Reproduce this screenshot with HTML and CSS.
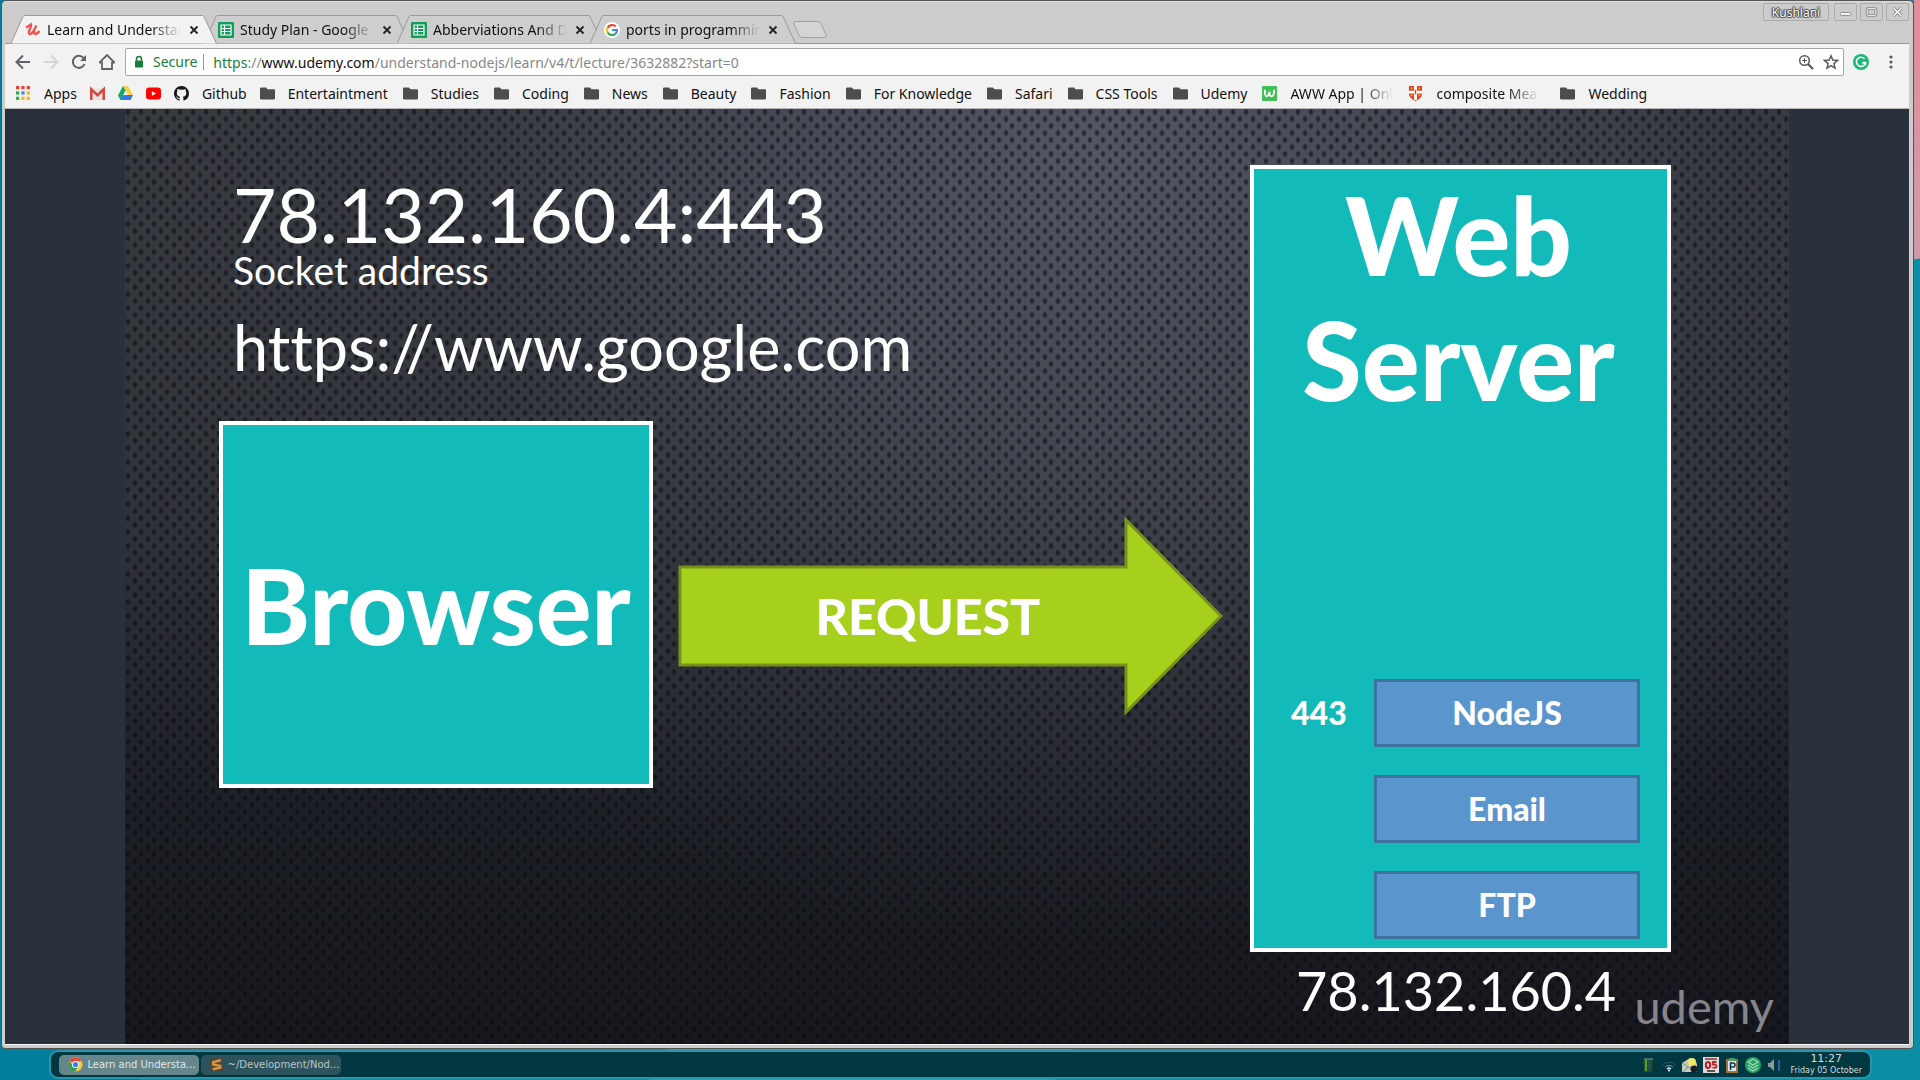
FILE: index.html
```html
<!DOCTYPE html>
<html lang="en">
<head>
<meta charset="utf-8">
<title>Learn and Understand NodeJS</title>
<link rel="stylesheet" href="styles.css">
</head>
<body>
<svg class="defs" width="0" height="0" aria-hidden="true">
  <symbol id="folder" viewBox="0 0 14 14"><path d="M1 1.500h4.500L7 3h6q1 0 1 1v7.500q0 1-1 1H1q-1 0-1-1v-9q0-1 1-1z" fill="#4d4d4d"/></symbol>
  <symbol id="sheet" viewBox="0 0 16 16"><rect width="16" height="16" rx="1" fill="#109d59"/><path d="M3 3h10v10H3zM3 6.500h10M3 9.500h10M6.500 3v10" fill="none" stroke="#fff" stroke-width="1.200"/></symbol>
  <symbol id="close" viewBox="0 0 10 10"><path d="M1.500 1.500l7 7m0-7l-7 7" stroke="#222" stroke-width="1.800" fill="none"/></symbol>
  <symbol id="tabshape" viewBox="0 0 206 29"><path d="M0 28.500L12 1.500Q12.500.500 14 .500H191Q192.500.500 193 1.500L205.500 28.500" stroke="#999"/></symbol>
</svg>
<div class="desktop">
<main class="window">
  <header class="titlebar">
    <nav class="tabs" aria-label="Tabs">
      <div class="tab active"><svg class="shape"><use href="#tabshape"/></svg>
        <svg class="fav" viewBox="0 0 16 16"><path d="M1 5.500Q4 4 6 2.500Q6.500 4 4.500 8Q3 12 5 12Q7.500 12 10 6L11.500 3.500M10 6Q8 12 10.500 12Q12.500 12 14.500 9" fill="none" stroke="#ec5252" stroke-width="2.300"/></svg>
        <a href="#">Learn and Understand</a><button aria-label="Close tab"><svg><use href="#close"/></svg></button></div>
      <div class="tab"><svg class="shape"><use href="#tabshape"/></svg><svg class="fav"><use href="#sheet"/></svg>
        <a href="#">Study Plan - Google Sheets</a><button aria-label="Close tab"><svg><use href="#close"/></svg></button></div>
      <div class="tab"><svg class="shape"><use href="#tabshape"/></svg><svg class="fav"><use href="#sheet"/></svg>
        <a href="#">Abberviations And Details</a><button aria-label="Close tab"><svg><use href="#close"/></svg></button></div>
      <div class="tab"><svg class="shape"><use href="#tabshape"/></svg>
        <svg class="fav" viewBox="0 0 16 16"><circle cx="8" cy="8" r="8" fill="#fff"/><g fill="none" stroke-width="2.200"><path d="M11.700 4.600A5 5 0 0 0 3.600 5.700" stroke="#ea4335"/><path d="M3.600 5.700A5 5 0 0 0 3.600 10.400" stroke="#fbbc05"/><path d="M3.600 10.400A5 5 0 0 0 11.300 11.800" stroke="#34a853"/><path d="M11.300 11.800A5 5 0 0 0 13 8H8" stroke="#4285f4"/></g></svg>
        <a href="#">ports in programming</a><button aria-label="Close tab"><svg><use href="#close"/></svg></button></div>
      <button class="newtab" aria-label="New tab"><svg viewBox="0 0 36 19"><path d="M3.500 1.500H26Q28 1.500 29 3.500L34 15Q35 17.500 33 17.500H10Q8 17.500 7 15.500L2 4Q1 1.500 3.500 1.500z" fill="#d4d4d4" stroke="#a0a0a0"/></svg></button>
    </nav>
    <div class="controls">
      <button class="user">Kushlani</button>
      <button aria-label="Minimize"><svg viewBox="0 0 22 16"><rect x="5.500" y="8.500" width="11" height="3" rx="1" fill="#fff" stroke="#888"/></svg></button>
      <button aria-label="Maximize"><svg viewBox="0 0 22 16"><g fill="none"><rect x="6.500" y="4.500" width="9" height="7" rx="1" stroke="#888" stroke-width="3"/><rect x="6.500" y="4.500" width="9" height="7" rx="1" stroke="#fff"/></g></svg></button>
      <button aria-label="Close"><svg viewBox="0 0 22 16"><path d="M7 4l8 8m0-8l-8 8" stroke="#888" stroke-width="3.500"/><path d="M7 4l8 8m0-8l-8 8" stroke="#fff" stroke-width="1.500"/></svg></button>
    </div>
  </header>
  <div class="toolbar">
    <button aria-label="Back"><svg viewBox="0 0 16 16"><path d="M15 8H2M8 1.500L1.500 8L8 14.500" fill="none" stroke="#5f6368" stroke-width="2"/></svg></button>
    <button aria-label="Forward"><svg viewBox="0 0 16 16"><path d="M1 8H14M8 1.500L14.500 8L8 14.500" fill="none" stroke="#d5d5d5" stroke-width="2"/></svg></button>
    <button aria-label="Reload"><svg viewBox="0 0 16 16"><path d="M13.500 10A6 6 0 1 1 12.500 4" fill="none" stroke="#5f6368" stroke-width="2"/><path d="M15 1v6H9z" fill="#5f6368"/></svg></button>
    <button aria-label="Home"><svg viewBox="0 0 16 16"><path d="M.500 8.500L8 1l7.500 7.500H13V15H3V8.500z" fill="none" stroke="#5f6368" stroke-width="1.800"/></svg></button>
    <div class="omnibox">
      <svg class="lock" viewBox="0 0 10 14"><path d="M2.500 6V4a2.500 2.500 0 0 1 5 0v2" fill="none" stroke="#188038" stroke-width="1.500"/><rect x="1" y="5.500" width="8" height="7" rx="1" fill="#188038"/></svg>
      <span class="secure">Secure</span>
      <span class="url"><b>https</b>://<i>www.udemy.com</i>/understand-nodejs/learn/v4/t/lecture/3632882?start=0<input type="text" aria-label="Address"></span>
      <button aria-label="Zoom"><svg viewBox="0 0 16 16"><g fill="none" stroke="#5a5a5a"><circle cx="6.500" cy="6.500" r="4.800" stroke-width="1.500"/><path d="M10 10l5 5" stroke-width="2.200"/><path d="M4 6.500h5M6.500 4v5"/></g></svg></button>
      <button aria-label="Bookmark"><svg viewBox="0 0 16 16"><path d="M8 1.800l1.800 4.300 4.700.400-3.600 3.100 1.100 4.600L8 11.700l-4 2.500 1.100-4.600L1.500 6.500l4.700-.400z" fill="none" stroke="#5a5a5a" stroke-width="1.500"/></svg></button>
    </div>
    <button class="ext" aria-label="Grammarly"><svg viewBox="0 0 16 16"><circle cx="8" cy="8" r="8" fill="#1cb871"/><path d="M11.500 4.800A4.600 4.600 0 1 0 12.500 9H9.500" fill="none" stroke="#fff" stroke-width="1.600"/><path d="M12.500 11.500V8.500H9.500" fill="none" stroke="#fff" stroke-width="1.300"/></svg></button>
    <button class="menu" aria-label="Menu"><svg viewBox="0 0 16 16"><g fill="#5a5a5a"><circle cx="8" cy="3" r="1.600"/><circle cx="8" cy="8" r="1.600"/><circle cx="8" cy="13" r="1.600"/></g></svg></button>
  </div>
  <nav class="bookmarks" aria-label="Bookmarks">
    <a href="#"><svg viewBox="0 0 14 14"><path d="M0 0h3v3H0z" fill="#ea4335"/><path d="M5 0h3v3H5zM10 0h3v3h-3z" fill="#ea4335"/><path d="M0 5h3v3H0z" fill="#34a853"/><path d="M5 5h3v3H5z" fill="#4285f4"/><path d="M10 5h3v3h-3z" fill="#fbbc05"/><path d="M0 10h3v3H0z" fill="#34a853"/><path d="M5 10h3v3H5zM10 10h3v3h-3z" fill="#fbbc05"/></svg>Apps</a>
    <a href="#" aria-label="Gmail"><svg viewBox="0 0 14 14"><path d="M0 2h14v11H0z" fill="#e8e4e2"/><path d="M1.200 13V3L7 8.500 12.800 3v10" fill="none" stroke="#d54b3d" stroke-width="2.400"/></svg></a>
    <a href="#" aria-label="Drive"><svg viewBox="0 0 14 14"><path d="M4.700 0h4.600L14 8.500H9.500z" fill="#ffcf48"/><path d="M4.700 0L7 4 2.300 13 0 8.800z" fill="#11a861"/><path d="M4.500 8.500H14L11.800 13H2.200z" fill="#3777e3"/></svg></a>
    <a href="#" aria-label="YouTube"><svg viewBox="0 0 14 14"><rect y="1.500" width="14" height="11" rx="3" fill="#f00"/><path d="M5.500 4.800L9.500 7 5.500 9.200z" fill="#fff"/></svg></a>
    <a href="#"><svg viewBox="0 0 16 16"><path fill="#191717" d="M8 0C3.580 0 0 3.580 0 8c0 3.540 2.290 6.530 5.470 7.590.4.070.55-.17.55-.38v-1.490c-2.010.37-2.530-.49-2.690-.94-.09-.23-.48-.94-.82-1.130-.28-.15-.68-.52-.01-.53.63-.01 1.080.58 1.230.82.72 1.210 1.870.87 2.330.66.07-.52.28-.87.51-1.070-1.780-.2-3.640-.89-3.640-3.950 0-.87.310-1.590.82-2.150-.08-.2-.36-1.020.08-2.120 0 0 .67-.21 2.200.82a7.600 7.600 0 0 1 4 0c1.530-1.040 2.200-.82 2.200-.82.44 1.100.16 1.920.08 2.120.51.56.82 1.270.82 2.150 0 3.070-1.870 3.750-3.650 3.950.29.25.54.73.54 1.480v2.190c0 .21.15.46.55.38A8 8 0 0 0 16 8c0-4.420-3.580-8-8-8z"/></svg>Github</a>
    <a href="#"><svg><use href="#folder"/></svg>Entertaintment</a>
    <a href="#"><svg><use href="#folder"/></svg>Studies</a>
    <a href="#"><svg><use href="#folder"/></svg>Coding</a>
    <a href="#"><svg><use href="#folder"/></svg>News</a>
    <a href="#"><svg><use href="#folder"/></svg>Beauty</a>
    <a href="#"><svg><use href="#folder"/></svg>Fashion</a>
    <a href="#"><svg><use href="#folder"/></svg>For Knowledge</a>
    <a href="#"><svg><use href="#folder"/></svg>Safari</a>
    <a href="#"><svg><use href="#folder"/></svg>CSS Tools</a>
    <a href="#"><svg><use href="#folder"/></svg>Udemy</a>
    <a href="#"><svg viewBox="0 0 16 16"><rect width="16" height="16" rx="1" fill="#3fbf55"/><path d="M3 4q0 7 2 7t3-5q0 5 2 5 3 0 3-7" fill="none" stroke="#fff" stroke-width="2"/></svg><span class="fade">AWW App | Online</span></a>
    <a href="#"><svg viewBox="0 0 14 16"><path d="M0 0h14v8q0 5-7 8Q0 13 0 8z" fill="#d9442a"/><path d="M7 0v15M0 6.500h14" stroke="#fff" stroke-width="3"/><path d="M2 2.500h2m6 0h2M2 10h2m6 0h2" stroke="#f0b030" stroke-width="2"/><path d="M7 4v5" stroke="#d9442a" stroke-width="1.500"/></svg><span class="fade wide">composite Meaning</span></a>
    <a href="#"><svg><use href="#folder"/></svg>Wedding</a>
  </nav>
  <section class="player" aria-label="Lecture video">
    <div class="slide">
      <div class="flow">
        <p class="socket">78.132.160.4:443</p>
        <p class="caption">Socket address</p>
        <p class="address">https://www.google.com</p>
        <div class="exchange">
          <div class="browser">Browser</div>
          <div class="arrow">
            <svg viewBox="0 0 546 198"><path d="M2 50H448V3L543 99L448 195V148H2z" fill="#a6d01c" stroke="#76921c" stroke-width="3"/></svg>
            <span>REQUEST</span>
          </div>
        </div>
      </div>
      <div class="host">
        <div class="server">
          <h1>Web<br>Server</h1>
          <div class="ports">
            <span>443</span><div class="service">NodeJS</div>
            <div class="service">Email</div>
            <div class="service">FTP</div>
          </div>
        </div>
        <p class="ip">78.132.160.4</p>
      </div>
      <span class="watermark">udemy</span>
    </div>
  </section>
</main>
<footer class="panel">
  <button class="task current"><svg viewBox="0 0 16 16"><circle cx="8" cy="8" r="7.500" fill="#f7cb3c"/><path d="M8 8L1.500 4.200A7.500 7.500 0 0 1 14.500 4.500H8z" fill="#dd4b3b"/><path d="M1.500 4.200A7.500 7.500 0 0 0 7.500 15.500L11 10 5 9z" fill="#2e9e5b"/><circle cx="8" cy="8" r="3.800" fill="#fff"/><circle cx="8" cy="8" r="2.800" fill="#3f7de8"/></svg>Learn and Understa...</button>
  <button class="task"><svg viewBox="0 0 16 16"><rect width="16" height="16" rx="2" fill="#46484b"/><path d="M12.500 3.500L4.500 5.500v2.500l7.500 1.500v1.800L4 13" fill="none" stroke="#e0952c" stroke-width="2.600"/></svg>~/Development/Nod...</button>
  <div class="tray">
    <svg viewBox="0 0 16 16"><path d="M3 2h10l-1 13H4z" fill="#264b28"/><path d="M5 3h2v11H5z" fill="#58a02c"/><path d="M8 3h2v9H8z" fill="#1d4f74"/><path d="M4 2h9" stroke="#789d75"/></svg>
    <svg viewBox="0 0 16 16"><g fill="none"><path d="M1.500 8a9 9 0 0 1 13 0" stroke="#315961"/><path d="M4 10a6 6 0 0 1 8 0" stroke="#789da2"/><path d="M6 12a3 3 0 0 1 4 0" stroke="#d3e0e2" stroke-width="1.500"/></g><circle cx="8" cy="13.500" r="1" fill="#fff"/></svg>
    <svg viewBox="0 0 16 16"><path d="M0 6l8-5 7 5v9H0z" fill="#c3cbc1"/><path d="M0 6l8 5 7-5M1 15l5-5" fill="none" stroke="#84918a"/><circle cx="10" cy="5" r="4" fill="#f1e763"/><circle cx="12" cy="12" r="3.500" fill="#1a1e20"/></svg>
    <svg viewBox="0 0 16 16"><path d="M0 0h16v16H0z" fill="#ddd"/><path d="M2 2h12" stroke="#a55" stroke-width="2"/><ellipse cx="5" cy="8" rx="2.200" ry="3" fill="none" stroke="#c41c22" stroke-width="2"/><path d="M13.500 5H10v2.500q4 0 3.500 2t-4 1" fill="none" stroke="#c41c22" stroke-width="1.800"/><path d="M4 14h8" stroke="#555" stroke-width="2"/></svg>
    <svg viewBox="0 0 16 16"><path d="M2 2h12v14H2z" fill="#a4733c"/><path d="M4 4h8v10H4z" fill="#d6e5ee"/><path d="M5 1h6v3H5z" fill="#4b9d6b"/><path d="M6.500 13V6H9a1.500 1.500 0 0 1 0 4H7" fill="none" stroke="#14344d" stroke-width="1.500"/></svg>
    <svg viewBox="0 0 16 16"><circle cx="8" cy="8" r="8" fill="#27a163"/><path d="M8 2l5 3-5 3-5-3zM3 8l5 3 5-3M3 11l5 3 5-3" fill="none" stroke="#a0dbb8" stroke-width="1.200"/></svg>
    <svg viewBox="0 0 16 16"><path d="M2 6h2l4-4v12l-4-4H2z" fill="#8d9b9d"/><path d="M13 3v11" stroke="#28619b" stroke-width="2"/></svg>
  </div>
  <time class="clock">11:27<small>Friday 05 October</small></time>
</footer>
</div>
</body>
</html>
```
FILE: styles.css
```css
* { box-sizing: border-box; }
body { margin: 0; font-family: "Noto Sans", sans-serif; font-size: 14px; color: #111; }
p, h1 { margin: 0; }
a { color: inherit; text-decoration: none; }
button { padding: 0; border: 0; background: none; font: inherit; color: inherit; display: flex; align-items: center; justify-content: center; }
.defs { position: absolute; }

.desktop {
  min-height: 100vh; display: flex; flex-direction: column;
  padding: 0 6px 1px 1px;
  background: linear-gradient(170deg, #e48c9c 0, #cf9aa8 255px, transparent 256px) right top / 6px 260px no-repeat,
    linear-gradient(120deg, #007e9b 0 30%, #1489a0 30% 50%, #1ba5b5 50% 66%, #098ea5 66%);
}
.window {
  flex: 1; display: flex; flex-direction: column; min-height: 0;
  border: 1px solid #555254; border-radius: 5px 5px 4px 4px;
  background: #ccc; padding: 0 4px 3px 3px;
  box-shadow: inset 0 1px #ddd;
}

/* Title bar and tabs */
.titlebar { height: 42px; display: flex; justify-content: space-between; align-items: flex-end; padding-left: 6px; }
.tabs { display: flex; align-items: flex-end; height: 28px; z-index: 1; }
.tab { position: relative; width: 206px; height: 29px; margin: 0 -13px -1px 0; padding: 0 18px 0 14px; display: flex; align-items: center; }
.tab a { width: 134px; overflow: hidden; white-space: nowrap; line-height: 20px; mask-image: linear-gradient(90deg, #000 104px, transparent 134px); }
.tab button svg { width: 10px; height: 10px; }
.tab > *:not(.shape) { z-index: 1; }
.tab .fav { width: 16px; height: 16px; flex: none; margin-right: 6px; }
.tab button { margin-left: 8px; }
.shape { position: absolute; inset: 0; width: 206px; height: 29px; fill: #cecece; }
.tab.active { z-index: 2; }
.tab.active .shape { fill: #f2f2f2; }
.newtab { margin-left: 9px; align-self: center; }
.newtab svg { width: 36px; height: 19px; }
.controls { align-self: flex-start; display: flex; gap: 3px; padding-top: 2px; }
.controls button { width: 23px; height: 18px; border: 1px solid #aaa; border-radius: 2px; }
.controls svg { width: 22px; height: 16px; }
.controls .user { width: 66px; margin-right: 2px; font-size: 12px; color: #fff; text-shadow: 0 0 1px #333, 1px 0 1px #444, -1px 0 1px #444, 0 1px 1px #444, 0 -1px 1px #444; }

/* Address row */
.toolbar { display: flex; align-items: center; height: 37px; padding: 0 10px; background: #f2f2f2; border-top: 1px solid #999; gap: 12px; }
.toolbar svg { width: 16px; height: 16px; }
.omnibox { flex: 1; height: 28px; margin: 0 -3px 0 -2px; padding: 0 4px 0 8px; display: flex; align-items: center; gap: 9px; background: #fff; border: 1px solid #a6a6a6; border-radius: 2px; }
.omnibox .lock { width: 10px; height: 14px; }
.secure { color: #188038; padding-right: 6px; border-right: 1px solid #999; line-height: 16px; }
.url { flex: 1; position: relative; color: #888; }
.url b { font-weight: 400; color: #188038; }
.url i { font-style: normal; color: #111; }
.url input { position: absolute; inset: 0; width: 100%; border: 0; background: transparent; }
.toolbar .ext { margin-right: 2px; }

/* Bookmarks */
.bookmarks { display: flex; align-items: center; gap: 13px; height: 29px; padding: 0 11px 2px; background: #f2f2f2; border-bottom: 1px solid #b5b5b5; white-space: nowrap; }
.bookmarks a { display: flex; align-items: center; gap: 13px; }
.bookmarks a:nth-child(n+6) { padding-right: 2px; }
.bookmarks svg { width: 15px; height: 15px; flex: none; }
.fade { width: 103px; overflow: hidden; mask-image: linear-gradient(90deg, #000 72px, transparent 103px); }
.fade.wide { width: 109px; }

/* Lecture slide */
.player { flex: 1; display: flex; justify-content: center; background: #2a303c; border-bottom: 1px solid #fff; }
.slide {
  position: relative; width: 87.4%; display: flex; justify-content: space-between;
  padding: 56px 118px 0 94px;
  font-family: Lato, sans-serif; color: #fff; line-height: 1; font-variant-ligatures: none;
  background:
    radial-gradient(ellipse 3px 4px at 3px 3px, rgba(8,10,14,.6) 35%, transparent) 0 0 / 13px 14px,
    radial-gradient(ellipse 3px 4px at 10px 10px, rgba(8,10,14,.6) 35%, transparent) 0 0 / 13px 14px,
    radial-gradient(ellipse 60% 85% at 58% 4%, #535663 0, #454853 35%, rgba(55,58,66,.6) 65%, transparent),
    linear-gradient(#383b40, #2f3238 45%, #1c1f25 75%, #17181d);
}
.flow { display: flex; flex-direction: column; }
.socket { padding: 12px 0 0 14px; font-size: 75px; line-height: 74px; }
.caption { padding-left: 14px; font-size: 39px; line-height: 38px; }
.address { padding: 20px 0 0 14px; font-size: 63px; line-height: 76px; }
.exchange { display: flex; align-items: center; gap: 25px; margin-top: 36px; }
.browser, .server { border: 4px solid #fff; background: #13baba; }
.browser { width: 434px; height: 367px; display: flex; align-items: center; justify-content: center; font-size: 104px; font-weight: 900; }
.arrow { position: relative; width: 546px; padding-top: 22px; }
.arrow svg { display: block; width: 100%; }
.arrow span { position: absolute; inset: 22px 46px 0 0; display: flex; align-items: center; justify-content: center; font-size: 50px; font-weight: 900; }
.host { width: 421px; display: flex; flex-direction: column; }
.server { height: 787px; display: flex; flex-direction: column; justify-content: space-between; padding: 3px 27px 9px 37px; }
.server h1 { margin-left: -14px; font-size: 108px; font-weight: 900; line-height: 125px; text-align: center; }
.ports { display: grid; grid-template-columns: 1fr 266px; gap: 28px 0; align-items: center; font-size: 32px; font-weight: 900; }
.service { grid-column: 2; height: 68px; display: flex; align-items: center; justify-content: center; background: #5b95ce; border: 3px solid #3e729f; }
.ip { padding: 6px 0 0 46px; font-size: 54px; line-height: 66px; }
.watermark { position: absolute; right: 15px; bottom: 14px; font-size: 47px; color: #85858b; }

/* Desktop panel */
.panel { margin: 1px 42px 0 48px; height: 29px; padding: 0 8px; display: flex; align-items: center; gap: 2px; background: #003740; border: 2px solid #2796ad; border-radius: 9px; font-family: "DejaVu Sans", sans-serif; color: #cfdcdd; }
.task { width: 140px; height: 20px; gap: 4px; padding-left: 6px; border-radius: 5px; background: #2d545c; font-size: 10px; color: #b8c6c8; }
.task.current { background: #66868b; color: #dfe8e9; }
.task svg { width: 15px; height: 15px; }
.tray { margin-left: auto; display: flex; gap: 5px; padding-right: 6px; }
.tray svg { width: 16px; height: 16px; }
.clock { display: flex; flex-direction: column; align-items: center; font-size: 11px; line-height: 12px; }
.clock small { font-size: 8px; line-height: 11px; }
```
